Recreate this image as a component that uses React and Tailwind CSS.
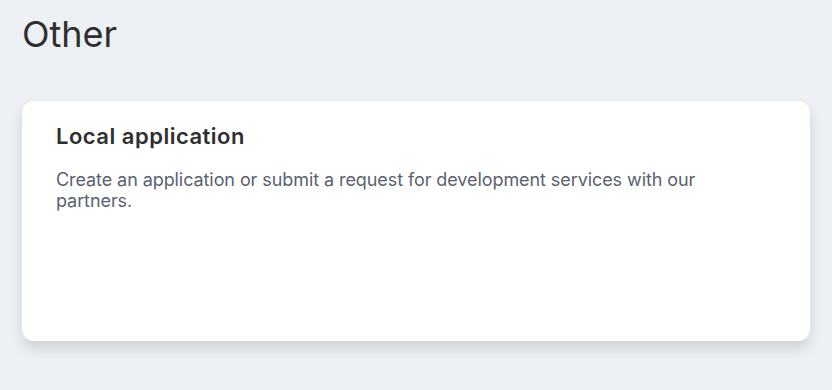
import React from 'react';

const App = () => {
  return (
    <div className="min-h-[390px] w-full bg-[#edf1f5] px-[22px] pt-[12px] pb-10 font-['Inter',sans-serif]">
      {/* Section title */}
      <h1 className="text-[36px] leading-[44px] font-normal text-[#2f2f2f]">Other</h1>

      {/* Card */}
      <div className="mt-[45px] h-[240px] rounded-[12px] bg-white px-[34px] pt-[20px] shadow-[0_8px_14px_rgba(0,0,0,0.13)]">
        <h2 className="text-[22px] leading-[30px] font-semibold tracking-[0.5px] text-[#2f2f2f]">Local application</h2>
        <p className="mt-[18px] text-[18px] leading-[21px] tracking-[-0.08px] text-[#5a6270]">
          Create an application or submit a request for development services with our partners.
        </p>
      </div>
    </div>
  );
};

export default App;
